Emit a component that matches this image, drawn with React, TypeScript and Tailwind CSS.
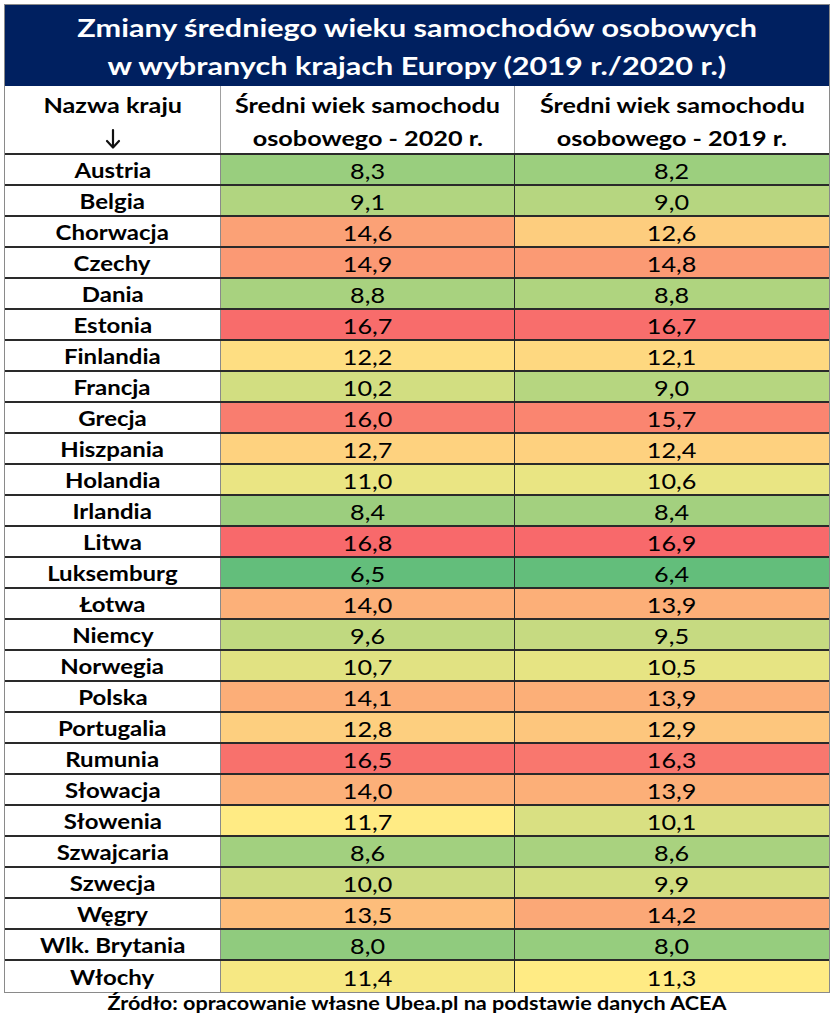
import React from "react";

const rows: [string, number, number][] = [
  ["Austria", 8.3, 8.2],
  ["Belgia", 9.1, 9.0],
  ["Chorwacja", 14.6, 12.6],
  ["Czechy", 14.9, 14.8],
  ["Dania", 8.8, 8.8],
  ["Estonia", 16.7, 16.7],
  ["Finlandia", 12.2, 12.1],
  ["Francja", 10.2, 9.0],
  ["Grecja", 16.0, 15.7],
  ["Hiszpania", 12.7, 12.4],
  ["Holandia", 11.0, 10.6],
  ["Irlandia", 8.4, 8.4],
  ["Litwa", 16.8, 16.9],
  ["Luksemburg", 6.5, 6.4],
  ["Łotwa", 14.0, 13.9],
  ["Niemcy", 9.6, 9.5],
  ["Norwegia", 10.7, 10.5],
  ["Polska", 14.1, 13.9],
  ["Portugalia", 12.8, 12.9],
  ["Rumunia", 16.5, 16.3],
  ["Słowacja", 14.0, 13.9],
  ["Słowenia", 11.7, 10.1],
  ["Szwajcaria", 8.6, 8.6],
  ["Szwecja", 10.0, 9.9],
  ["Węgry", 13.5, 14.2],
  ["Wlk. Brytania", 8.0, 8.0],
  ["Włochy", 11.4, 11.3],
];

const LOW = [99, 190, 123];
const MID = [255, 235, 132];
const HIGH = [248, 105, 107];

function scale(values: number[]) {
  const sorted = [...values].sort((a, b) => a - b);
  const min = sorted[0];
  const max = sorted[sorted.length - 1];
  const pos = (sorted.length - 1) * 0.5;
  const lo = Math.floor(pos);
  const mid = sorted[lo] + (sorted[Math.ceil(pos)] - sorted[lo]) * (pos - lo);
  return (v: number) => {
    let a: number[], b: number[], t: number;
    if (v <= mid) {
      a = LOW;
      b = MID;
      t = mid === min ? 1 : (v - min) / (mid - min);
    } else {
      a = MID;
      b = HIGH;
      t = max === mid ? 0 : (v - mid) / (max - mid);
    }
    const c = a.map((x, i) => Math.round(x + (b[i] - x) * t));
    return `rgb(${c[0]},${c[1]},${c[2]})`;
  };
}

const c2020 = scale(rows.map((r) => r[1]));
const c2019 = scale(rows.map((r) => r[2]));

const fmt = (v: number) => v.toFixed(1).replace(".", ",");

function W({ children }: { children: React.ReactNode }) {
  return <span className="inline-block scale-x-[1.2] whitespace-nowrap">{children}</span>;
}

function DownArrow() {
  return (
    <svg width="16" height="22" viewBox="0 0 16 22" className="mt-[2px]">
      <path
        d="M8 2 V19 M2 13 L8 19.5 L14 13"
        fill="none"
        stroke="#111"
        strokeWidth="2.2"
        strokeLinecap="round"
        strokeLinejoin="round"
      />
    </svg>
  );
}

export default function App() {
  return (
    <div
      className="bg-white w-[834px] h-[1024px] pt-1 pl-1 text-black"
      style={{ fontFamily: "Lato, 'Open Sans', sans-serif" }}
    >
      <div className="w-[826px] border border-[#8a8a8a]">
        <div className="h-[81px] bg-[#002060] flex flex-col items-center justify-center pt-[1px] text-white font-bold text-[25.5px] leading-[38px]">
          <W>Zmiany średniego wieku samochodów osobowych</W>
          <W>w wybranych krajach Europy (2019 r./2020 r.)</W>
        </div>
        <div className="h-[69px] grid grid-cols-[216px_294px_1fr] border-b-2 border-[#2a2a2a] text-[21px] font-bold leading-[33px] overflow-hidden">
          <div className="flex flex-col items-center justify-center pt-[2px] border-r border-[#a0a0a0]">
            <W>Nazwa kraju</W>
            <div className="h-[33px] flex items-center justify-center">
              <DownArrow />
            </div>
          </div>
          <div className="flex flex-col items-center justify-center pt-[2px] border-r border-[#a0a0a0]">
            <W>Średni wiek samochodu</W>
            <W>osobowego - 2020 r.</W>
          </div>
          <div className="flex flex-col items-center justify-center pt-[2px]">
            <W>Średni wiek samochodu</W>
            <W>osobowego - 2019 r.</W>
          </div>
        </div>
        {rows.map(([name, a, b], i) => (
          <div
            key={name}
            className={`h-[31px] grid grid-cols-[216px_294px_1fr] overflow-hidden ${
              i < rows.length - 1 ? "border-b-2 border-[#2a2a2a]" : ""
            }`}
          >
            <div className="flex items-center justify-center pt-[1px] font-bold text-[20px] leading-[28px] border-r border-[#8a8a8a] bg-white">
              <W>{name}</W>
            </div>
            <div
              className="flex items-center justify-center pt-[2px] text-[21px] leading-[27px] border-r border-[#2a2a2a]"
              style={{ backgroundColor: c2020(a) }}
            >
              <W>{fmt(a)}</W>
            </div>
            <div
              className="flex items-center justify-center pt-[2px] text-[21px] leading-[27px]"
              style={{ backgroundColor: c2019(b) }}
            >
              <W>{fmt(b)}</W>
            </div>
          </div>
        ))}
      </div>
      <div className="w-[826px] text-center font-bold text-[18px] leading-[24px] mt-[-2px]">
        <W>Źródło: opracowanie własne Ubea.pl na podstawie danych ACEA</W>
      </div>
    </div>
  );
}
